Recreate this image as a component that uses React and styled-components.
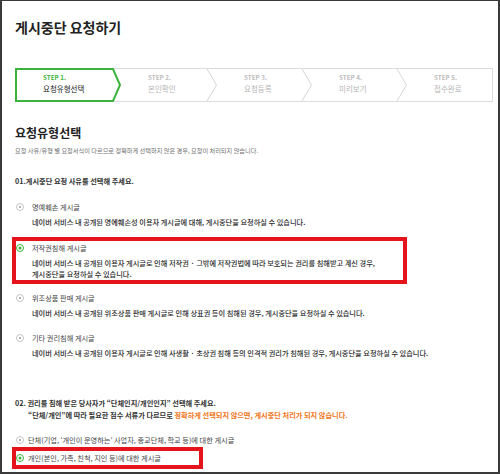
import React from "react";
import styled, { createGlobalStyle } from "styled-components";

const GREEN = "#3cb43c";
const RED = "#e5141c";
const ORANGE = "#ef7520";

const Global = createGlobalStyle`
  html, body {
    margin: 0;
    padding: 0;
    background: #fff;
  }
  body {
    font-family: "Noto Sans CJK KR", "Noto Sans", sans-serif;
  }
`;

const Frame = styled.div`
  width: 500px;
  height: 474px;
  box-sizing: border-box;
  border: 2px solid #3a3a3a;
  border-top-width: 1px;
  padding: 17px 0 0 13px;
  overflow: hidden;
  background: #fff;
`;

const Title = styled.h1`
  margin: 0;
  font-size: 14px;
  line-height: 18px;
  font-weight: 700;
  color: #222;
`;

const StepBar = styled.div`
  display: flex;
  margin-top: 32px;
  width: 478px;
  height: 34px;
  box-sizing: border-box;
  border: 1px solid #dcdcdc;
`;

const Step = styled.div`
  position: relative;
  flex: none;
  width: ${p => p.$w}px;
  box-sizing: border-box;
  padding: 5px 0 0 27px;
`;

const StepNo = styled.div`
  font-size: 6.3px;
  line-height: 8px;
  font-weight: 700;
  color: ${p => (p.$active ? GREEN : "#bdbdbd")};
`;

const StepName = styled.div`
  margin-top: 1px;
  font-size: 7.5px;
  line-height: 11px;
  color: ${p => (p.$active ? "#222" : "#b5b5b5")};
`;

const Chevron = styled.svg`
  position: absolute;
  top: 0;
  right: 0;
  overflow: visible;
`;

const ActiveOutline = styled.svg`
  position: absolute;
  top: -1px;
  left: -1px;
  overflow: visible;
`;

const Heading = styled.h2`
  margin: 23px 0 0;
  font-size: 12px;
  line-height: 16px;
  font-weight: 700;
  color: #222;
`;

const Sub = styled.p`
  margin: 5px 0 0;
  font-size: 6.2px;
  line-height: 10px;
  color: #6f6f6f;
`;

const Question = styled.p`
  margin: ${p => p.$mt}px 0 0;
  font-size: 7.2px;
  line-height: 12px;
  font-weight: 700;
  color: #333;
  white-space: nowrap;
`;

const QuestionIndent = styled.span`
  display: block;
  padding-left: 13px;
`;

const Warn = styled.span`
  color: ${ORANGE};
`;

const Option = styled.div`
  margin-top: ${p => p.$mt}px;
  margin-left: ${p => (p.$boxed ? -3 : 1)}px;
  width: ${p => (p.$boxed ? `${p.$boxW}px` : "auto")};
  box-sizing: border-box;
  border: ${p => (p.$boxed ? `4px solid ${RED}` : "none")};
`;

const OptionLabel = styled.div`
  display: flex;
  align-items: center;
  gap: ${p => p.$gap}px;
  height: 14px;
  font-size: 7.2px;
  color: #444;
  white-space: nowrap;
`;

const Radio = styled.span`
  position: relative;
  flex: none;
  width: 8px;
  height: 8px;
  box-sizing: border-box;
  border-radius: 50%;
  border: ${p => (p.$on ? `1.5px solid ${GREEN}` : "1px solid #c4c4c4")};
  background: #fff;

  &::after {
    content: "";
    position: absolute;
    left: 50%;
    top: 50%;
    width: ${p => (p.$on ? 3 : 2)}px;
    height: ${p => (p.$on ? 3 : 2)}px;
    border-radius: 50%;
    transform: translate(-50%, -50%);
    background: ${p => (p.$on ? GREEN : "#999")};
  }
`;

const Desc = styled.p`
  margin: 3px 0 0;
  padding-left: 16px;
  font-size: 7.2px;
  line-height: 11px;
  font-weight: 500;
  color: #2a2a2a;
  white-space: nowrap;
`;

const steps = [
  { no: "STEP 1.", name: "요청유형선택", w: 105 },
  { no: "STEP 2.", name: "본인확인", w: 96 },
  { no: "STEP 3.", name: "요청등록", w: 95 },
  { no: "STEP 4.", name: "미리보기", w: 95 },
  { no: "STEP 5.", name: "접수완료", w: 85 }
];

const reasons = [
  {
    label: "명예훼손 게시글",
    desc: ["네이버 서비스 내 공개된 명예훼손성 이용자 게시글에 대해, 게시중단을 요청하실 수 있습니다."],
    mt: 13
  },
  {
    label: "저작권침해 게시글",
    desc: [
      "네이버 서비스 내 공개된 이용자 게시글로 인해 저작권 · 그밖에 저작권법에 따라 보호되는 권리를 침해받고 계신 경우,",
      "게시중단을 요청하실 수 있습니다."
    ],
    mt: 9,
    on: true,
    boxW: 395
  },
  {
    label: "위조상품 판매 게시글",
    desc: ["네이버 서비스 내 공개된 위조상품 판매 게시글로 인해 상표권 등이 침해된 경우, 게시중단을 요청하실 수 있습니다."],
    mt: 7
  },
  {
    label: "기타 권리침해 게시글",
    desc: ["네이버 서비스 내 공개된 이용자 게시글로 인해 사생활 · 초상권 침해 등의 인격적 권리가 침해된 경우, 게시중단을 요청하실 수 있습니다."],
    mt: 12
  }
];

export default function App() {
  return (
    <>
      <Global />
      <Frame>
        <Title>게시중단 요청하기</Title>

        <StepBar>
          {steps.map((s, i) => {
            const active = i === 0;
            const last = i === steps.length - 1;
            return (
              <Step key={s.no} $w={s.w}>
                <StepNo $active={active}>{s.no}</StepNo>
                <StepName $active={active}>{s.name}</StepName>
                {!last && !active && (
                  <Chevron width="10" height="32">
                    <polyline points="0,0 9.5,16 0,32" fill="none" stroke="#d6d6d6" strokeWidth="1" />
                  </Chevron>
                )}
                {active && (
                  <ActiveOutline width={s.w + 1} height="34">
                    <polygon
                      points={`1,1 ${s.w - 7},1 ${s.w},17 ${s.w - 7},33 1,33`}
                      fill="none"
                      stroke={GREEN}
                      strokeWidth="2"
                    />
                  </ActiveOutline>
                )}
              </Step>
            );
          })}
        </StepBar>

        <Heading>요청유형선택</Heading>
        <Sub>요청 사유/유형 별 요청서식이 다르므로 정확하게 선택하지 않은 경우, 요청이 처리되지 않습니다.</Sub>

        <Question $mt={19}>01.게시중단 요청 사유를 선택해 주세요.</Question>

        {reasons.map(r => (
          <Option key={r.label} $mt={r.mt} $boxed={!!r.boxW} $boxW={r.boxW}>
            <OptionLabel $gap={8}>
              <Radio $on={r.on} />
              {r.label}
            </OptionLabel>
            <Desc>
              {r.desc.map((line, i) => (
                <React.Fragment key={i}>
                  {i > 0 && <br />}
                  {line}
                </React.Fragment>
              ))}
            </Desc>
          </Option>
        ))}

        <Question $mt={38}>
          02. 권리를 침해 받은 당사자가 “단체인지/개인인지” 선택해 주세요.
          <QuestionIndent>
            “단체/개인”에 따라 필요한 접수 서류가 다르므로{" "}
            <Warn>정확하게 선택되지 않으면, 게시중단 처리가 되지 않습니다.</Warn>
          </QuestionIndent>
        </Question>

        <Option $mt={12}>
          <OptionLabel $gap={4}>
            <Radio />
            단체(기업, ‘개인이 운영하는’ 사업자, 종교단체, 학교 등)에 대한 게시글
          </OptionLabel>
        </Option>
        <Option $mt={0} $boxed $boxW={191}>
          <OptionLabel $gap={4}>
            <Radio $on />
            개인(본인, 가족, 친척, 지인 등)에 대한 게시글
          </OptionLabel>
        </Option>
      </Frame>
    </>
  );
}
